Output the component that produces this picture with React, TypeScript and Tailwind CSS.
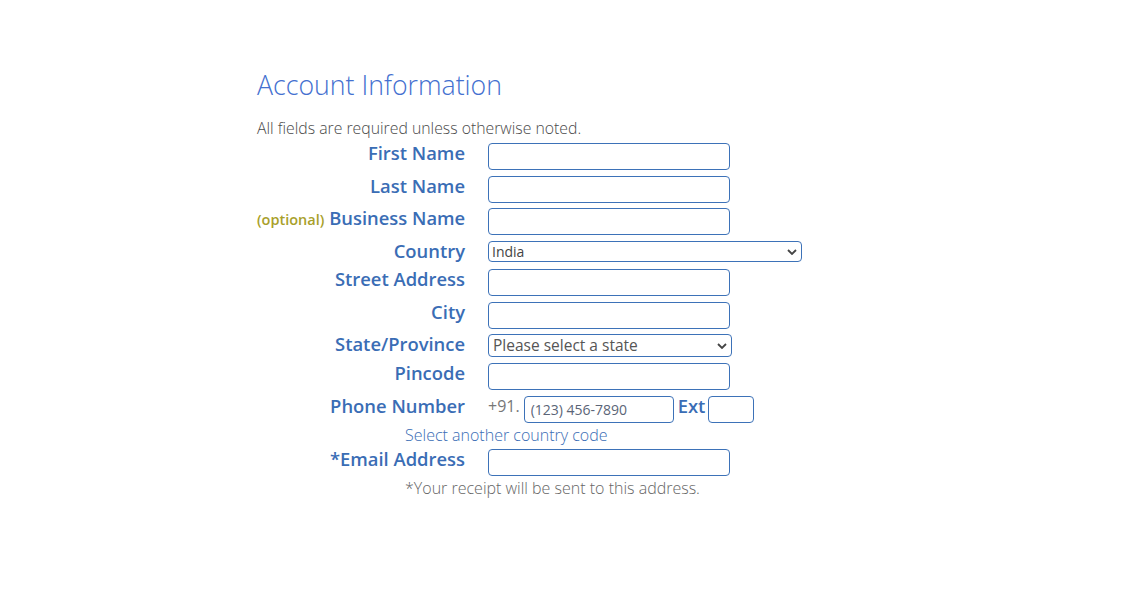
import React from "react";

const font = { fontFamily: '"Open Sans", "Noto Sans", Arial, sans-serif' };

function Chevron() {
  return (
    <svg width="10" height="7" viewBox="0 0 10 7" className="absolute right-[5px] top-1/2 -translate-y-1/2 pointer-events-none">
      <path d="M1 1.5 L5 5.5 L9 1.5" fill="none" stroke="#444" strokeWidth="1.8" />
    </svg>
  );
}

function Label({ children }: { children: React.ReactNode }) {
  return (
    <div className="w-[208px] shrink-0 text-right text-[18.4px] leading-[22px] font-semibold text-[#3a6db5] whitespace-nowrap">
      {children}
    </div>
  );
}

function TextInput({ w = "w-[242px]", placeholder }: { w?: string; placeholder?: string }) {
  return (
    <input
      className={`${w} block h-[27px] mt-[1px] border border-[#3d72b8] rounded-[4px] bg-white px-[6px] text-[14px] text-[#555] placeholder:text-[#5b6577] outline-none`}
      placeholder={placeholder}
      style={font}
    />
  );
}

function Row({ label, mt, children }: { label: React.ReactNode; mt: string; children: React.ReactNode }) {
  return (
    <div className={`flex items-start ${mt}`}>
      <Label>{label}</Label>
      <div className="ml-[23px] flex items-start">{children}</div>
    </div>
  );
}

export default function App() {
  return (
    <div className="min-h-screen bg-white" style={font}>
      <div className="w-[612px] mx-auto pt-[67px]">
        <h1 className="text-[26.7px] leading-[36px] font-light text-[#4470d0]">Account Information</h1>
        <p className="mt-[15px] text-[15.8px] leading-[20px] font-light text-[#4a4a4a]">
          All fields are required unless otherwise noted.
        </p>

        <Row label="First Name" mt="mt-[4px]">
          <TextInput />
        </Row>
        <Row label="Last Name" mt="mt-[5px]">
          <TextInput />
        </Row>
        <Row
          label={
            <>
              <span className="text-[14.5px] leading-none text-[#a8a02a]">(optional)</span> Business Name
            </>
          }
          mt="mt-[4px]"
        >
          <TextInput />
        </Row>
        <Row label="Country" mt="mt-[5px]">
          <div className="relative mt-[1px]">
            <select
              className="appearance-none block w-[314px] h-[21px] border border-[#3d72b8] rounded-[4px] bg-white pl-[3px] text-[14px] leading-[19px] text-[#444] outline-none"
              style={font}
              defaultValue="India"
            >
              <option>India</option>
            </select>
            <Chevron />
          </div>
        </Row>
        <Row label="Street Address" mt="mt-[6px]">
          <TextInput />
        </Row>
        <Row label="City" mt="mt-[5px]">
          <TextInput />
        </Row>
        <Row label="State/Province" mt="mt-[4px]">
          <div className="relative mt-[1px]">
            <select
              className="appearance-none block w-[244px] h-[23px] border border-[#3d72b8] rounded-[4px] bg-white pl-[4px] text-[15.5px] leading-[21px] text-[#555] outline-none"
              style={font}
              defaultValue="x"
            >
              <option value="x">Please select a state</option>
            </select>
            <Chevron />
          </div>
        </Row>
        <Row label="Pincode" mt="mt-[5px]">
          <TextInput />
        </Row>
        <Row label="Phone Number" mt="mt-[5px]">
          <span className="text-[16px] leading-[22px] text-[#777]">+91.</span>
          <TextInput w="w-[150px] ml-[4px]" placeholder="(123) 456-7890" />
          <span className="ml-[4px] text-[18.4px] leading-[22px] font-semibold text-[#3a6db5]">Ext</span>
          <TextInput w="w-[46px] ml-[3px]" />
        </Row>
        <div className="pl-[148px] mt-[2px] text-[16px] leading-[20px] font-light text-[#3a6db5]">
          Select another country code
        </div>
        <Row label="*Email Address" mt="mt-[3px]">
          <TextInput />
        </Row>
        <div className="pl-[148px] mt-[2px] text-[16px] leading-[20px] font-light text-[#666]">
          *Your receipt will be sent to this address.
        </div>
      </div>
    </div>
  );
}
